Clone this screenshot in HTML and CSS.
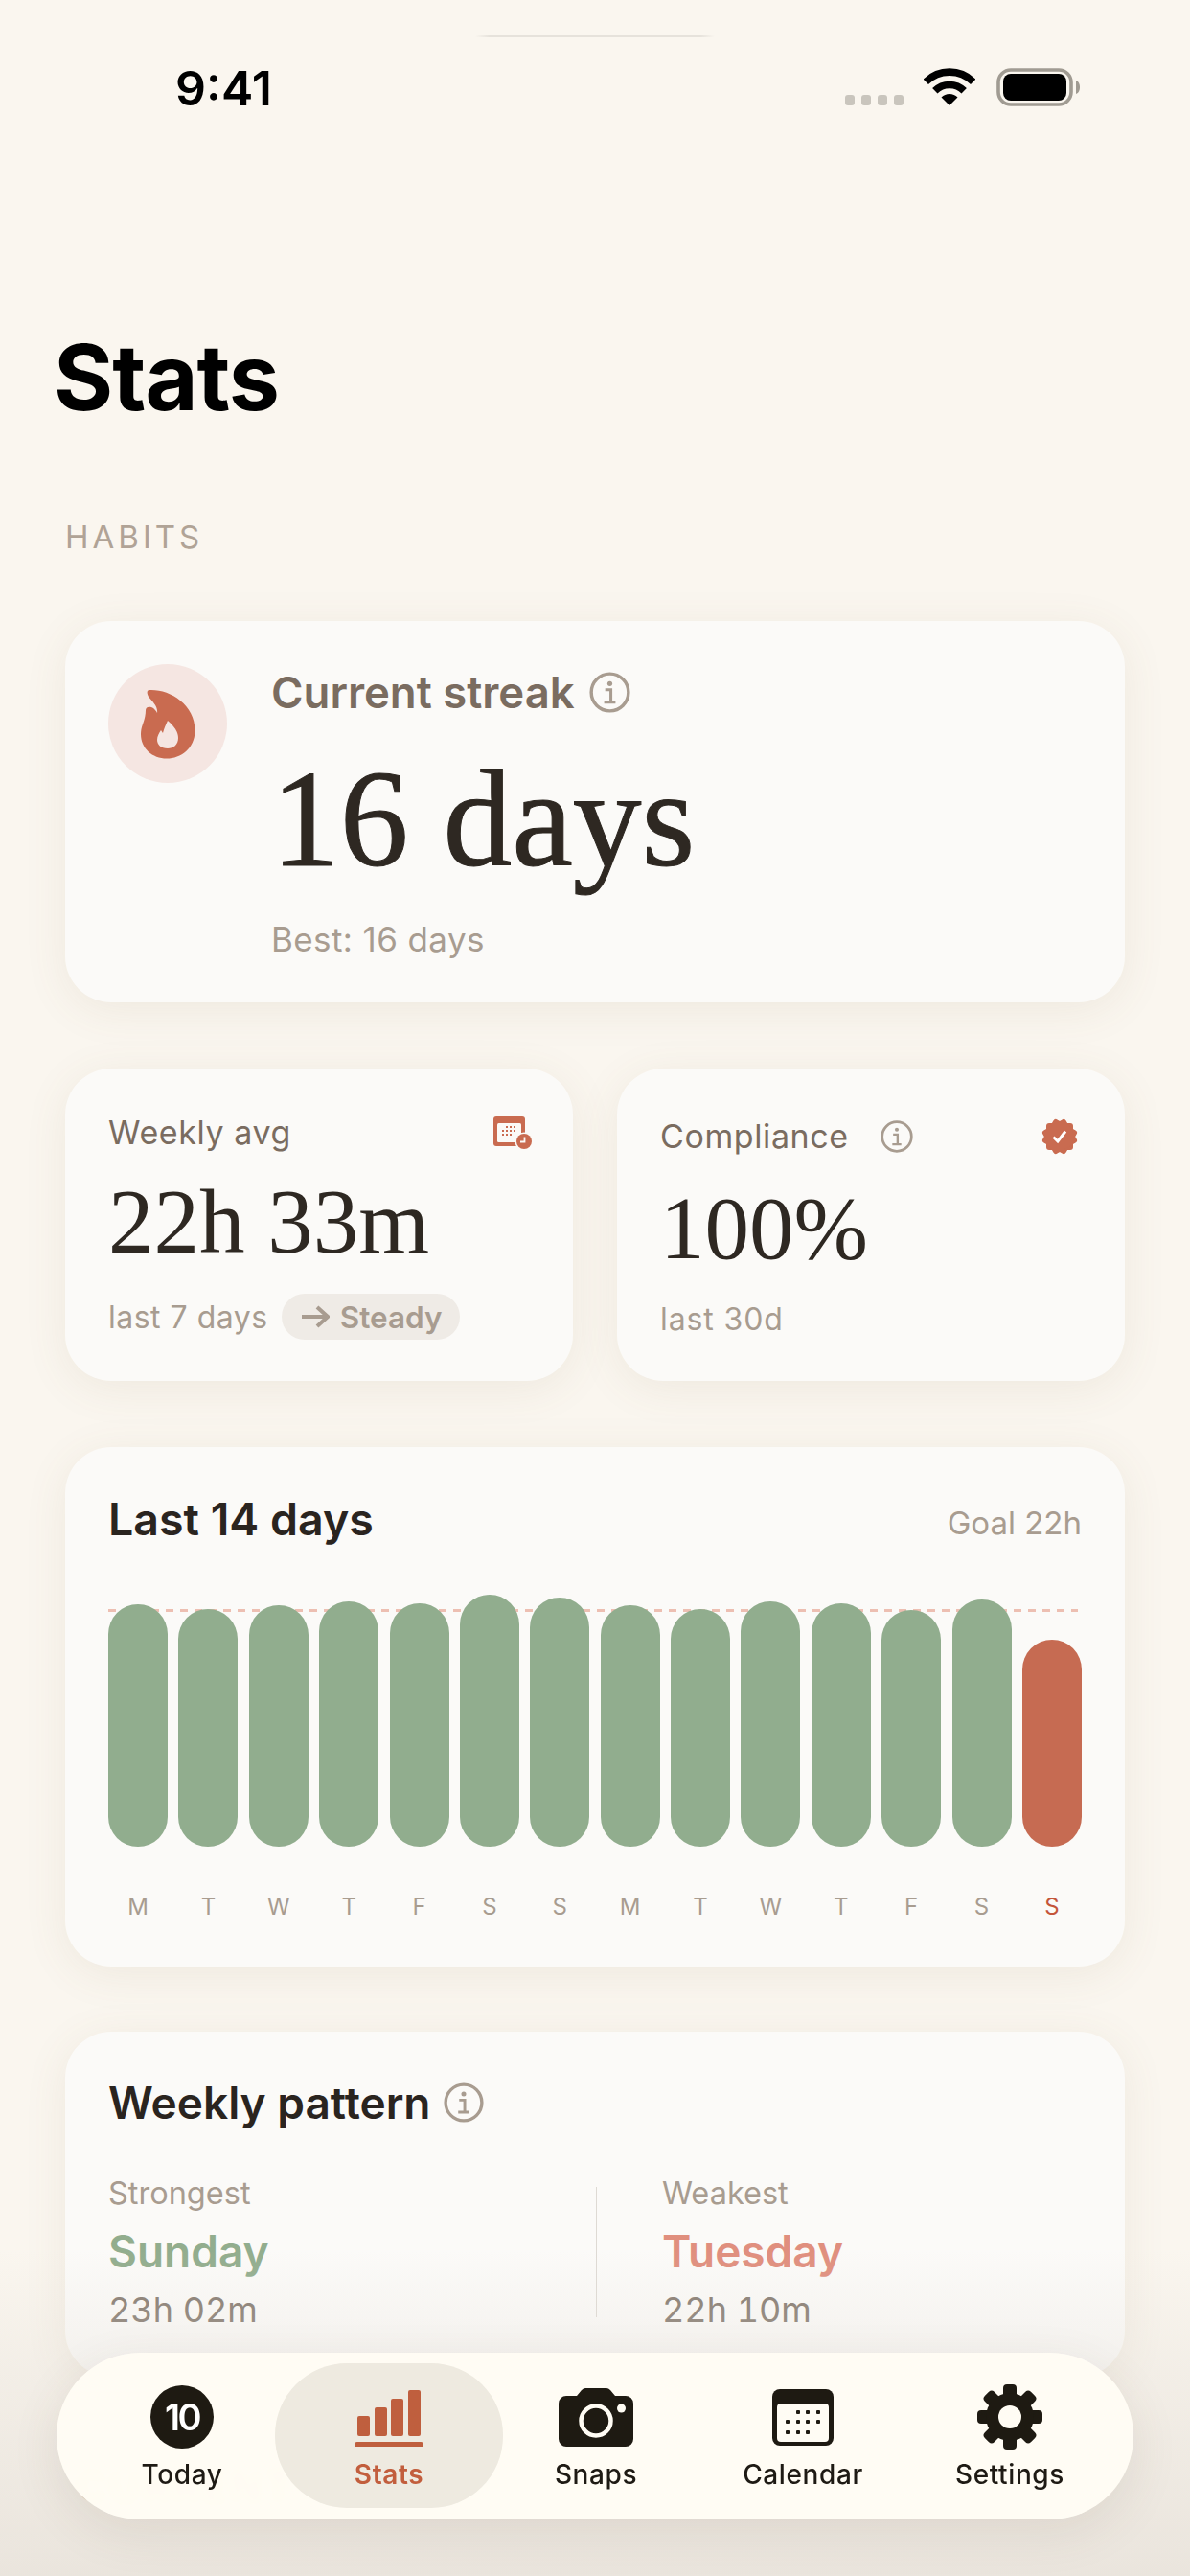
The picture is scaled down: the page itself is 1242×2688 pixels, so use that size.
FILE: index.html
```html
<!DOCTYPE html>
<html lang="en">
<head>
<meta charset="utf-8">
<title>Stats</title>
<link rel="stylesheet" href="styles.css">
</head>
<body>
<div class="screen">
  <svg width="0" height="0" class="defs" aria-hidden="true">
    <symbol id="info" viewBox="0 0 40 40">
      <circle cx="20" cy="20" r="18" fill="none" stroke="currentColor" stroke-width="3.2"/>
      <circle cx="20" cy="11.5" r="2.4" fill="currentColor"/>
      <path d="M15.5 17.5H21V29M14.5 29.5H25.5" fill="none" stroke="currentColor" stroke-width="2.8"/>
    </symbol>
  </svg>

  <header class="status">
    <div class="status-line"></div>
    <div class="status-row">
      <span class="clock">9:41</span>
      <div class="status-icons">
        <div class="signal"><i></i><i></i><i></i><i></i></div>
        <svg class="wifi" viewBox="0 0 54 39"><path d="M2.3 14.3A35 35 0 0 1 51.7 14.3M11.8 23.8A21.5 21.5 0 0 1 42.2 23.8" fill="none" stroke="#000" stroke-width="7.6"/><path d="M27 39L18.5 30.5A12 12 0 0 1 35.5 30.5Z" fill="#000"/></svg>
        <svg class="battery" viewBox="0 0 87 40"><rect x="2" y="2" width="76" height="36" rx="13" fill="none" stroke="#A09B92" stroke-width="3.6"/><rect x="7" y="6" width="66" height="28" rx="8" fill="#000"/><path d="M83 13C86 14 87 17 87 20S86 26 83 27Z" fill="#A09B92"/></svg>
      </div>
    </div>
  </header>

  <main class="content">
    <h1 class="page-title">Stats</h1>
    <div class="section-label">HABITS</div>

    <section class="card streak">
      <div class="flame-disc">
        <svg class="flame" viewBox="0 0 57 73"><path d="M9 1C30 0 57 16 56.500 44C56 62 42 72.500 27 72.500C12 72.500 0 62 0 47C0 38 5 33 5 22C5 19 8 18 11 19C14 20 16 23 17 25C18 18 12 13 8 8C6 4 6 1 9 1Z" fill="#C96B50"/><path d="M28 33C34 38 39 44 39 51C39 58 34 62 28 62C21 62 17 58 17 53C17 49 19 46 21 43L23 46C24 42 26 37 28 33Z" fill="#F5E6E2"/></svg>
      </div>
      <div class="streak-body">
        <div class="streak-label">Current streak <svg class="info info-lg"><use href="#info"/></svg></div>
        <div class="streak-value">16 days</div>
        <div class="streak-best">Best: 16 days</div>
      </div>
    </section>

    <div class="pair">
      <section class="card mini">
        <div class="mini-head">
          <span class="mini-label">Weekly avg</span>
          <svg class="cal-clock" viewBox="0 0 40 34"><rect width="33" height="31" rx="3" fill="#C96B50"/><rect x="4" y="7" width="25" height="20" rx="1.500" fill="#FBFAF7"/><g fill="#C96B50"><rect x="13" y="10" width="2" height="2"/><rect x="17" y="10" width="2" height="2"/><rect x="21" y="10" width="2" height="2"/><rect x="9" y="14" width="2" height="2"/><rect x="13" y="14" width="2" height="2"/><rect x="17" y="14" width="2" height="2"/><rect x="21" y="14" width="2" height="2"/><rect x="9" y="18" width="2" height="2"/><rect x="13" y="18" width="2" height="2"/><rect x="17" y="18" width="2" height="2"/></g><circle cx="32" cy="26" r="9.500" fill="#FBFAF7"/><circle cx="32" cy="26" r="8" fill="#C96B50"/><path d="M32.500 21.500V26.500H28" fill="none" stroke="#FBFAF7" stroke-width="1.800"/></svg>
        </div>
        <div class="mini-value">22h 33m</div>
        <div class="mini-foot">
          <span class="mini-sub">last 7 days</span>
          <span class="trend"><svg class="trend-arrow" viewBox="0 0 30 24"><path d="M1 12H27M17 2L28 12L17 22" fill="none" stroke="currentColor" stroke-width="4"/></svg>Steady</span>
        </div>
      </section>

      <section class="card mini mini-alt">
        <div class="mini-head">
          <span class="mini-label">Compliance <svg class="info info-sm"><use href="#info"/></svg></span>
          <svg class="seal" viewBox="0 0 38 38"><g fill="#C96B50"><rect x="5" y="5" width="28" height="28" rx="3"/><rect x="5" y="5" width="28" height="28" rx="3" transform="rotate(30 19 19)"/><rect x="5" y="5" width="28" height="28" rx="3" transform="rotate(60 19 19)"/></g><path d="M12.500 19.500L17 24L25 13.500" fill="none" stroke="#FFF" stroke-width="3"/></svg>
        </div>
        <div class="mini-value">100%</div>
        <div class="mini-foot"><span class="mini-sub">last 30d</span></div>
      </section>
    </div>

    <section class="card chart-card">
      <div class="chart-head">
        <h2 class="card-title">Last 14 days</h2>
        <span class="goal">Goal 22h</span>
      </div>
      <div class="chart">
        <div class="goal-line"></div>
        <div class="bar" style="height:253px"></div>
        <div class="bar" style="height:248px"></div>
        <div class="bar" style="height:252px"></div>
        <div class="bar" style="height:256px"></div>
        <div class="bar" style="height:254px"></div>
        <div class="bar" style="height:263px"></div>
        <div class="bar" style="height:260px"></div>
        <div class="bar" style="height:252px"></div>
        <div class="bar" style="height:248px"></div>
        <div class="bar" style="height:256px"></div>
        <div class="bar" style="height:254px"></div>
        <div class="bar" style="height:247px"></div>
        <div class="bar" style="height:258px"></div>
        <div class="bar bar-today" style="height:216px"></div>
      </div>
      <div class="days">
        <span>M</span><span>T</span><span>W</span><span>T</span><span>F</span><span>S</span><span>S</span>
        <span>M</span><span>T</span><span>W</span><span>T</span><span>F</span><span>S</span><span class="day-today">S</span>
      </div>
    </section>

    <section class="card pattern">
      <div class="pattern-head">
        <h2 class="card-title">Weekly pattern</h2>
        <svg class="info info-md"><use href="#info"/></svg>
      </div>
      <div class="split">
        <div class="split-col">
          <div class="split-label">Strongest</div>
          <div class="split-day day-strong">Sunday</div>
          <div class="split-time">23h 02m</div>
        </div>
        <div class="split-rule"></div>
        <div class="split-col">
          <div class="split-label">Weakest</div>
          <div class="split-day day-weak">Tuesday</div>
          <div class="split-time">22h 10m</div>
        </div>
      </div>
    </section>

    <div class="section-label section-next">CURRENT</div>
  </main>

  <div class="fade"></div>

  <nav class="tabs">
    <div class="tab">
      <div class="tab-icon"><span class="today-badge">10</span></div>
      <span class="tab-label">Today</span>
    </div>
    <div class="tab tab-active">
      <div class="tab-icon"><svg class="ic-stats" viewBox="0 0 72 59"><g fill="#BF5F3E"><rect x="3" y="27" width="13" height="21" rx="2"/><rect x="21" y="18" width="13" height="30" rx="2"/><rect x="38" y="9" width="13" height="39" rx="2"/><rect x="56" y="0" width="13" height="48" rx="2"/><rect x="0" y="54" width="72" height="5.500" rx="2.750"/></g></svg></div>
      <span class="tab-label">Stats</span>
    </div>
    <div class="tab">
      <div class="tab-icon"><svg class="ic-camera" viewBox="0 0 78 61"><path d="M8 8H19L24 2Q26 0 28 0H50Q52 0 54 2L59 8H70A8 8 0 0 1 78 16V53A8 8 0 0 1 70 61H8A8 8 0 0 1 0 53V16A8 8 0 0 1 8 8Z" fill="#1E1A12"/><circle cx="39" cy="34" r="15.500" fill="none" stroke="#FFFCF4" stroke-width="4.500"/><circle cx="65.500" cy="21" r="4.500" fill="#FFFCF4"/></svg></div>
      <span class="tab-label">Snaps</span>
    </div>
    <div class="tab">
      <div class="tab-icon"><svg class="ic-calendar" viewBox="0 0 64 59"><rect width="64" height="59" rx="8" fill="#1E1A12"/><rect x="5" y="15" width="54" height="40" rx="4" fill="#FFFCF4"/><g fill="#1E1A12"><rect x="25" y="22" width="4" height="4" rx="1"/><rect x="35" y="22" width="4" height="4" rx="1"/><rect x="46" y="22" width="4" height="4" rx="1"/><rect x="14" y="32" width="4" height="4" rx="1"/><rect x="25" y="32" width="4" height="4" rx="1"/><rect x="35" y="32" width="4" height="4" rx="1"/><rect x="46" y="32" width="4" height="4" rx="1"/><rect x="14" y="43" width="4" height="4" rx="1"/><rect x="25" y="43" width="4" height="4" rx="1"/><rect x="35" y="43" width="4" height="4" rx="1"/></g></svg></div>
      <span class="tab-label">Calendar</span>
    </div>
    <div class="tab">
      <div class="tab-icon"><svg class="ic-gear" viewBox="0 0 68 68"><g fill="#1E1A12"><rect x="27" y="0" width="14" height="68" rx="4"/><rect x="27" y="0" width="14" height="68" rx="4" transform="rotate(45 34 34)"/><rect x="27" y="0" width="14" height="68" rx="4" transform="rotate(90 34 34)"/><rect x="27" y="0" width="14" height="68" rx="4" transform="rotate(135 34 34)"/><circle cx="34" cy="34" r="25"/></g><circle cx="34" cy="34" r="12" fill="#FFFCF4"/></svg></div>
      <span class="tab-label">Settings</span>
    </div>
  </nav>
</div>
</body>
</html>
```

FILE: styles.css
```css
* { box-sizing: border-box; }
html, body { margin: 0; padding: 0; }
body { background: #FAF6EF; font-family: Inter, "Noto Sans", sans-serif; }

.screen { position: relative; width: 1242px; height: 2688px; overflow: hidden; background: #FAF6EF; }
.defs { position: absolute; }

/* Status bar */
.status { height: 180px; padding-top: 37px; }
.status-line { width: 250px; height: 2px; margin: 0 auto; background: linear-gradient(90deg, transparent, #E6E2DB 6%, #E6E2DB 94%, transparent); }
.status-row { display: flex; justify-content: space-between; padding: 32px 115px 0 183px; height: 42px; }
.clock { font-size: 50px; font-weight: 600; line-height: 42px; color: #000; }
.status-icons { display: flex; align-items: flex-start; }
.signal { display: flex; gap: 7px; margin-top: 28px; margin-right: 21px; }
.signal i { display: block; width: 10px; height: 11px; border-radius: 3px; background: #C9C5BD; }
.wifi { width: 54px; height: 39px; margin-right: 22px; }
.battery { width: 87px; height: 40px; }

/* Content */
.content { padding: 0 68px; }
.page-title { margin: 160px 0 0 -12px; font-size: 95px; line-height: 108px; font-weight: 700; color: #000; letter-spacing: -1px; }
.section-label { margin: 92px 0 68px; font-size: 33px; line-height: 40px; font-weight: 400; letter-spacing: 4px; color: #B0A396; }

.card { background: #FBFAF8; border-radius: 48px; box-shadow: 0 8px 46px rgba(120, 95, 70, 0.09); }

/* Streak */
.streak { display: flex; gap: 46px; height: 398px; padding: 45px; }
.flame-disc { display: flex; align-items: center; justify-content: center; width: 124px; height: 124px; border-radius: 50%; background: #F5E6E2; }
.flame { width: 57px; height: 73px; }
.streak-label { display: flex; align-items: center; gap: 15px; height: 58px; font-size: 45.500px; font-weight: 600; color: #7A6C60; }
.streak-value { margin-top: 29px; font-family: "Liberation Serif", serif; font-size: 143.500px; line-height: 150px; color: #2E2822; -webkit-text-stroke: 1px #2E2822; }
.streak-best { margin-top: 28px; font-size: 35px; line-height: 44px; color: #A89C90; letter-spacing: 0.4px; }

.info { display: block; color: #A89C90; flex: none; }
.info-lg { width: 43px; height: 43px; }
.info-md { width: 42px; height: 42px; }
.info-sm { width: 34px; height: 34px; }

/* Pair */
.pair { display: grid; grid-template-columns: 530px 530px; gap: 46px; margin-top: 69px; }
.mini { height: 326px; padding: 45px 43px 0 45px; }
.mini-alt { padding: 49px 49px 0 45px; }
.mini-head { display: flex; justify-content: space-between; align-items: center; height: 44px; }
.mini-label { display: flex; align-items: center; gap: 33px; font-size: 34px; line-height: 44px; color: #7A6C60; letter-spacing: 0.6px; }
.mini-value { margin-top: 21px; font-family: "Liberation Serif", serif; font-size: 95px; line-height: 100px; color: #2E2822; }
.mini-alt .mini-value { margin-top: 24px; font-size: 93px; }
.mini-foot { display: flex; align-items: center; gap: 14px; height: 48px; margin-top: 25px; }
.mini-alt .mini-foot { margin-top: 20px; }
.mini-sub { font-size: 32px; color: #A89C90; letter-spacing: 0.5px; }
.mini-alt .mini-sub { letter-spacing: 0.9px; }
.trend { display: flex; align-items: center; gap: 11px; height: 48px; padding: 0 19px 0 20px; border-radius: 24px; background: #EFEBE6; font-size: 31.500px; font-weight: 600; color: #A89C90; }
.trend-arrow { width: 30px; height: 24px; }
.cal-clock { width: 40px; height: 34px; }
.seal { width: 38px; height: 38px; }

/* Chart */
.chart-card { margin-top: 69px; height: 542px; padding: 46px 45px 0; }
.chart-head { display: flex; justify-content: space-between; align-items: center; height: 58px; }
.card-title { margin: 0; font-size: 46.500px; line-height: 58px; font-weight: 600; color: #2A241F; }
.goal { font-size: 33px; color: #A89C90; padding-top: 8px; }
.chart { position: relative; display: grid; grid-template-columns: repeat(14, 62px); justify-content: space-between; align-items: end; height: 263px; margin-top: 50px; }
.goal-line { position: absolute; left: 0; right: 4px; top: 15px; height: 3px; background: repeating-linear-gradient(90deg, #EDBFB2 0 8px, transparent 8px 15px); }
.bar { position: relative; border-radius: 31px; background: #91AD8E; }
.bar-today { background: #C66B52; }
.days { display: grid; grid-template-columns: repeat(14, 62px); justify-content: space-between; margin-top: 47px; font-size: 24px; line-height: 32px; color: #A89C90; text-align: center; }
.day-today { color: #C4553A; }

/* Weekly pattern */
.pattern { margin-top: 68px; height: 360px; padding: 45px 45px 0; }
.pattern-head { display: flex; align-items: center; gap: 13px; height: 58px; }
.pattern .card-title { font-size: 46px; }
.split { display: grid; grid-template-columns: 509px 1px 1fr; margin-top: 46px; }
.split-rule { height: 136px; margin-top: 13px; background: #DEDAD4; }
.split-col:last-child { padding-left: 68px; }
.split-label { font-size: 32.500px; line-height: 40px; color: #A89C90; }
.split-day { margin-top: 11px; font-size: 46px; line-height: 58px; font-weight: 600; }
.day-strong { color: #92AD8E; }
.day-weak { color: #E08F7E; }
.split-time { margin-top: 10px; font-size: 36px; line-height: 44px; color: #857A70; font-variant-numeric: tabular-nums; }

.section-next { margin: 90px 0 0 12px; font-size: 42px; line-height: 50px; }

/* Fade behind the bar */
.fade { position: absolute; left: 0; right: 0; bottom: 0; height: 340px; background: linear-gradient(180deg, rgba(228, 222, 214, 0) 0%, rgba(228, 222, 214, 0.35) 40%, rgba(228, 222, 214, 0.72) 100%); }

/* Tab bar */
.tabs { position: absolute; left: 59px; bottom: 59px; isolation: isolate; display: grid; grid-template-columns: repeat(5, 216px); width: 1124px; height: 174px; padding: 0 23px; border-radius: 87px; background: rgba(255, 252, 244, 0.975); backdrop-filter: blur(5px); box-shadow: 0 14px 50px rgba(90, 70, 50, 0.1); }
.tab { position: relative; display: flex; flex-direction: column; align-items: center; padding-top: 33px; }
.tab-active::before { content: ""; position: absolute; z-index: -1; top: 11px; bottom: 12px; left: -11px; right: -11px; border-radius: 75px; background: #EEEAE0; }
.tab-icon { display: flex; align-items: center; justify-content: center; height: 68px; }
.tab-label { margin-top: 8px; font-size: 28px; line-height: 36px; font-weight: 500; color: #1E1A14; letter-spacing: 0.6px; }
.tab-active .tab-label { color: #C25E3D; font-weight: 600; }
.today-badge { display: flex; align-items: center; justify-content: center; width: 66px; height: 66px; border-radius: 50%; background: #1E1A12; color: #FFF; font-size: 38px; font-weight: 600; letter-spacing: -2.500px; }
.ic-stats { width: 72px; height: 59px; margin-top: 2px; }
.ic-camera { width: 78px; height: 61px; }
.ic-calendar { width: 64px; height: 59px; }
.ic-gear { width: 68px; height: 68px; }
```
